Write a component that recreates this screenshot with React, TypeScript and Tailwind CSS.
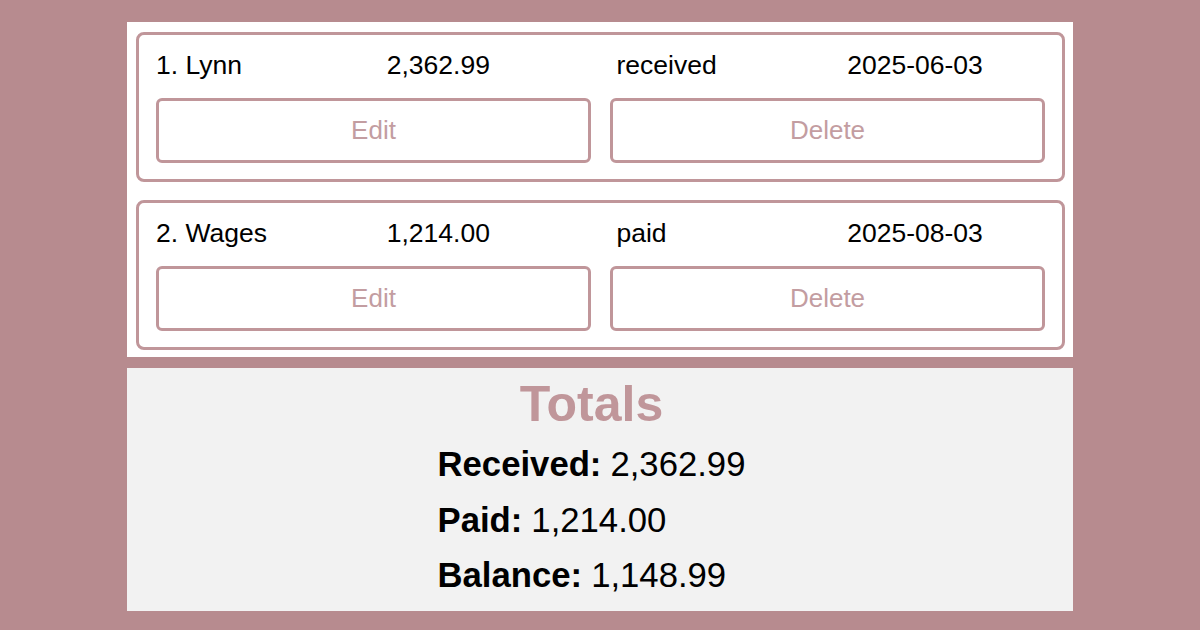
const rows = [
  { n: 1, name: "Lynn", amount: "2,362.99", kind: "received", date: "2025-06-03" },
  { n: 2, name: "Wages", amount: "1,214.00", kind: "paid", date: "2025-08-03" },
];

const font = { fontFamily: '"Liberation Sans", Arial, sans-serif' };

function EntryCard({ row }: { row: (typeof rows)[number] }) {
  return (
    <div className="rounded-[8px] border-[3px] border-[#c0969a] pt-[15px] pb-[16px]">
      <div className="grid grid-cols-4 text-[26.5px] leading-[30px] text-black">
        <span className="pl-[17px]">
          {row.n}. {row.name}
        </span>
        <span className="pl-[17px]">{row.amount}</span>
        <span className="pl-[16px]">{row.kind}</span>
        <span className="pl-[16px]">{row.date}</span>
      </div>
      <div className="mt-[18px] grid grid-cols-2 gap-[19px] px-[17px]">
        <button className="h-[65px] rounded-[6px] border-[3px] border-[#c0969a] bg-white text-[26px] text-[#c39da1]">
          Edit
        </button>
        <button className="h-[65px] rounded-[6px] border-[3px] border-[#c0969a] bg-white text-[26px] text-[#c39da1]">
          Delete
        </button>
      </div>
    </div>
  );
}

export default function App() {
  return (
    <div className="h-[630px] w-[1200px] bg-[#b78b8f] pt-[22px]" style={font}>
      <div className="mx-[127px] flex flex-col gap-[18px] bg-white pt-[10px] pb-[7px] pl-[9px] pr-[8px]">
        {rows.map((r) => (
          <EntryCard key={r.n} row={r} />
        ))}
      </div>

      <div className="mx-[127px] mt-[11px] h-[243px] bg-[#f2f2f2] pt-[7px] pr-[17px]">
        <h2 className="text-center text-[50px] font-bold leading-[58px] text-[#c0969a]">Totals</h2>
        <dl className="mx-auto mt-[4px] w-fit text-[34.7px] leading-[55.5px] text-black">
          <div className="flex gap-[9px]">
            <dt className="font-bold">Received:</dt>
            <dd>2,362.99</dd>
          </div>
          <div className="flex gap-[9px]">
            <dt className="font-bold">Paid:</dt>
            <dd>1,214.00</dd>
          </div>
          <div className="flex gap-[9px]">
            <dt className="font-bold">Balance:</dt>
            <dd>1,148.99</dd>
          </div>
        </dl>
      </div>
    </div>
  );
}
